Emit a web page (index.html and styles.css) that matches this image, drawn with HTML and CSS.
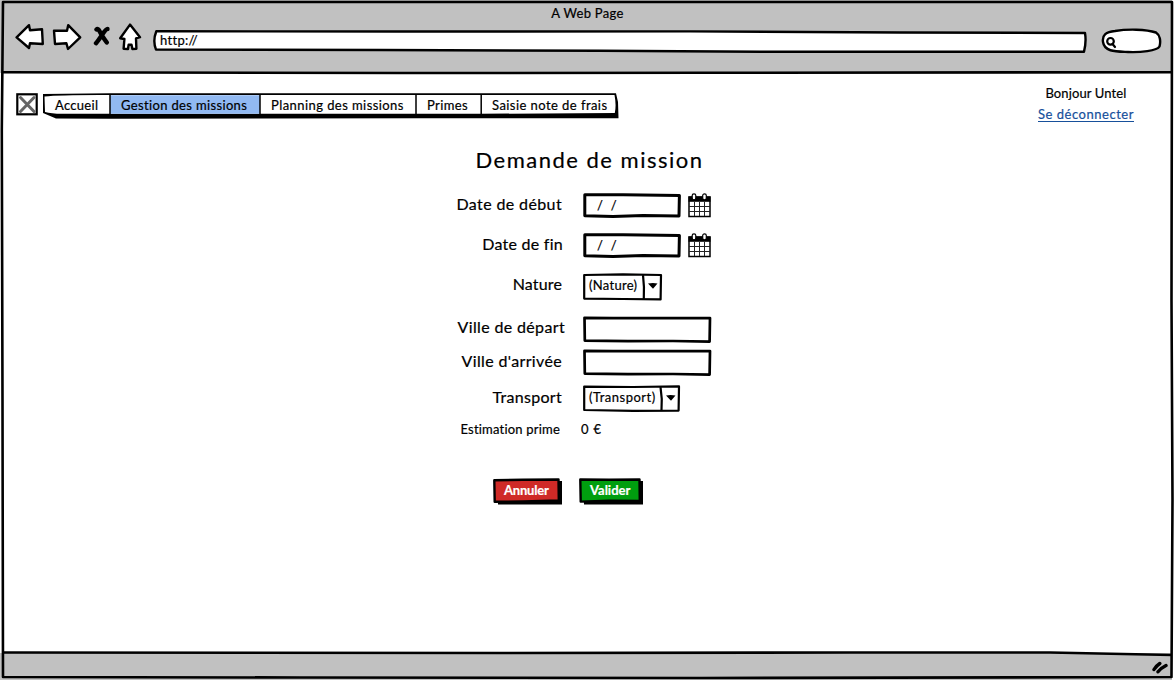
FILE: index.html
```html
<!DOCTYPE html>
<html lang="fr">
<head>
<meta charset="utf-8">
<title>Demande de mission</title>
<link rel="stylesheet" href="styles.css">
</head>
<body>
<div class="browser">
  <header class="chrome">
    <div class="title"><span class="t-title">A Web Page</span></div>
    <div class="toolbar">
      <svg class="icon" width="30" height="28" viewBox="15 23 30 28"><path class="ink-shape" d="M16.600 37.400 29 25.200 30 30.200 42 29.200 42.800 44 30 43.200 29 48z"/></svg>
      <svg class="icon icon-forward" width="30" height="28" viewBox="52 23 30 28"><path class="ink-shape" d="M54 30.600 67 30.800 68.200 25.200 80.200 37.400 68 49 66.400 43.200 55 44z"/></svg>
      <svg class="icon icon-stop" width="18" height="28" viewBox="93 23 18 28"><path class="cross" d="M96.500 29.500Q98 28 100 32T106.800 42.500M107.500 29Q106 29 102 35T96 43.200"/></svg>
      <svg class="icon icon-home" width="24" height="28" viewBox="118 23 24 28"><path class="ink-shape" d="M130 24.600 140 37.200 136 38.400 136.400 48.800 132.400 49 131.500 44.800 128.600 44.800 128 49 123.600 48.800 124.400 39 120.200 38.200z"/></svg>
      <div class="address">
        <svg class="sketch" width="936" height="26" viewBox="152 28 936 26"><path class="ink-shape" d="M156.300 31.300 400 31.500 690 31.400 900 32.500 1085 33Q1086.500 42 1084 51.800L760 51.700 600 50.800 380 50 156 49.600Q152.500 41 156.300 31.300z"/></svg>
        <span class="t-url">http://</span>
      </div>
      <svg class="icon icon-search" width="62" height="26" viewBox="1101 28 62 26"><path class="ink-shape" d="M1103 42C1102 35 1106 31.800 1115 31 1127 29 1146 29 1156 32.500 1160 35 1161 41 1159.500 46.500 1157 51 1140 52.500 1128 52 1116 51.500 1104.500 52 1103 42z"/><circle class="lens" cx="1110.500" cy="41.300" r="3.300"/><path class="lens" d="M1112.500 44 1115 47"/></svg>
    </div>
  </header>

  <main class="page">
    <div class="topbar">
      <svg class="logo" width="23" height="23" viewBox="16 93 23 23"><rect class="logo-box" x="17.300" y="94.300" width="19.400" height="20"/><path class="logo-cross" d="M20.500 97.500 34 111.500M34 97.500 20.500 111.500"/></svg>
      <nav class="menu">
        <svg class="sketch" width="577" height="28" viewBox="42 92 577 28"><path d="M43 94 110 93.300 616 93.300 618 102 618.500 118.200 420 118.200 260 118.500 110 118.800 56 118.500 43 113z"/><path fill="#fff" d="M44.500 96.500Q60 94.800 110 95H614.500Q616.500 105 614.800 113L480 113.800H64Q52 114 45 112z"/><path fill="#91b9f2" d="M110 95.200H260V113.800H110z"/><path class="divider" d="M110 94V116M260 94V116M416 94V116M481.200 94V116"/></svg>
        <a class="tab tab-accueil">Accueil</a><a class="tab tab-gestion">Gestion des missions</a><a class="tab tab-planning">Planning des missions</a><a class="tab tab-primes">Primes</a><a class="tab tab-frais">Saisie note de frais</a>
      </nav>
      <div class="user"><span class="t-hello">Bonjour Untel</span><a class="logout">Se déconnecter</a></div>
    </div>

    <h1 class="heading">Demande de mission</h1>

    <form class="form">
      <div class="row row-date">
        <label class="label l-debut">Date de début</label>
        <div class="date"><svg class="sketch" width="98" height="25" viewBox="0 0 98 25"><path class="field-date" d="M1.800 1.800 40 1.800 96.400 2.600 96 23 60 22.600 30 23.400 1.800 22.800z"/></svg><span>/</span><span>/</span></div>
        <svg class="calendar" width="23" height="25" viewBox="0 0 23 25"><path fill="#fff" stroke="#000" stroke-width="1.500" d="M1 4H22V23.500H1z"/><path d="M.5 3.500H22.500V8.800H.5z"/><path class="grid-line" d="M1 13.500H22M1 18.500H22M6.500 9V23M11.500 9V23M16.500 9V23"/><rect class="ring" x="4.200" y=".8" width="3.600" height="6" rx="1.800"/><rect class="ring" x="14.700" y=".8" width="3.600" height="6" rx="1.800"/></svg>
      </div>
      <div class="row row-date">
        <label class="label l-fin">Date de fin</label>
        <div class="date"><svg class="sketch" width="98" height="25" viewBox="0 0 98 25"><path class="field-date" d="M1.800 1.800 40 1.800 96.400 2.600 96 23 60 22.600 30 23.400 1.800 22.800z"/></svg><span>/</span><span>/</span></div>
        <svg class="calendar" width="23" height="25" viewBox="0 0 23 25"><path fill="#fff" stroke="#000" stroke-width="1.500" d="M1 4H22V23.500H1z"/><path d="M.5 3.500H22.500V8.800H.5z"/><path class="grid-line" d="M1 13.500H22M1 18.500H22M6.500 9V23M11.500 9V23M16.500 9V23"/><rect class="ring" x="4.200" y=".8" width="3.600" height="6" rx="1.800"/><rect class="ring" x="14.700" y=".8" width="3.600" height="6" rx="1.800"/></svg>
      </div>
      <div class="row row-nature">
        <label class="label l-nature">Nature</label>
        <div class="select"><svg class="sketch" width="80" height="28" viewBox="0 0 80 28"><path class="field" d="M1.200 2 40 1.400 78 2 77.600 26.400 40 26 1.200 25.600z"/><path class="field" d="M60 2Q61.500 14 60.800 26"/><path d="M65 10.500Q70 9.500 74.500 10.500L70 15.800z"/></svg><span class="t-nature">(Nature)</span></div>
      </div>
      <div class="row row-depart">
        <label class="label l-depart">Ville de départ</label>
        <div class="input"><svg class="sketch" width="129" height="27" viewBox="0 0 129 27"><path class="field-input" d="M1.500 1.800 30 2.200 127 2 126.600 25.600 90 25 45 25.200 1.800 24.600z"/></svg></div>
      </div>
      <div class="row row-arrivee">
        <label class="label l-arrivee">Ville d'arrivée</label>
        <div class="input"><svg class="sketch" width="129" height="27" viewBox="0 0 129 27"><path class="field-input" d="M1.500 1.800 30 2.200 127 2 126.600 25.600 90 25 45 25.200 1.800 24.600z"/></svg></div>
      </div>
      <div class="row row-transport">
        <label class="label l-transport">Transport</label>
        <div class="select"><svg class="sketch" width="98" height="28" viewBox="0 0 98 28"><path class="field" d="M1.200 1.600 50 2 96 1.400 95.600 25.600 50 25.800 1.200 25z"/><path class="field" d="M77.500 2Q79.500 14 78.500 25"/><path d="M83 10.500Q87.500 9.500 92.500 10.500L88 15.800z"/></svg><span class="t-transport">(Transport)</span></div>
      </div>
      <div class="row row-prime">
        <span class="label label-small">Estimation prime</span>
        <span class="amount">0 €</span>
      </div>
      <div class="actions">
        <button type="button" class="button b-cancel"><svg class="sketch" width="70" height="27" viewBox="0 0 70 27"><path d="M4 3H69V26.500H5z"/><path class="button-face" fill="#cf2a27" d="M1.300 2.200 30 1.800 65.500 1.500 65.800 22.500 30 23.400 1.700 23.800z"/></svg><span>Annuler</span></button>
        <button type="button" class="button b-ok"><svg class="sketch" width="64" height="27" viewBox="0 0 64 27"><path d="M4 3H64V26.500H5z"/><path class="button-face" fill="#009e0f" d="M1.300 1.500 30 1.800 60.500 1.500 60.800 23 30 22.800 1.700 23.600z"/></svg><span>Valider</span></button>
      </div>
    </form>
  </main>

  <footer class="status">
    <svg width="18" height="16" viewBox="1150 659 18 16"><path class="grip" d="M1154 669.500Q1156 666 1159.800 663.500M1158 671.800Q1161 668 1166 665.500"/></svg>
  </footer>
  <svg class="frame" width="1174" height="680" viewBox="0 0 1174 680"><path class="frame-line" d="M3 2H1172L1171.500 300 1172.500 500 1171.500 677 700 678 300 677.500 3 677 2.500 400 1.800 130z"/><path class="frame-line" d="M3 72.200 400 73 700 72.800 1172 72.200M3 652.500 500 653 850 652.500 1050 652.500 1172 655"/></svg>
</div>
</body>
</html>
```
FILE: styles.css
```css
* { box-sizing: border-box; }
body {
  margin: 0;
  background: #fff;
  color: #000;
  font: 13px/20px Lato, "Open Sans", sans-serif;
  letter-spacing: 0.3px;
  font-variant-ligatures: none;
  -webkit-text-stroke: 0.2px;
}
svg { display: block; flex: none; }
.browser { position: relative; width: 1174px; height: 680px; display: flex; flex-direction: column; overflow: hidden; }
.frame { position: absolute; inset: 0; pointer-events: none; }
.frame-line { fill: none; stroke: #000; stroke-width: 2.6; stroke-linejoin: round; }
.sketch { position: absolute; left: 0; top: 0; z-index: -1; }
.ink-shape { fill: #fff; stroke: #000; stroke-width: 2.4; stroke-linejoin: round; }

/* Browser chrome */
.chrome { height: 73px; background: #c1c1c1; padding: 3px 0 0 15px; margin-right: 2px; }
.title { height: 20px; text-align: center; padding-right: 12px; }
.toolbar { display: flex; align-items: flex-start; }
.icon-forward { margin-left: 7px; }
.icon-stop { margin-left: 11px; }
.icon-home { margin-left: 7px; }
.cross { fill: none; stroke: #000; stroke-width: 4.4; stroke-linecap: round; }
.address { position: relative; z-index: 0; flex: none; width: 936px; height: 26px; margin: 5px 0 0 10px; padding: 2px 0 0 8px; }
.icon-search { margin: 5px 0 0 13px; }
.lens { fill: none; stroke: #000; stroke-width: 2.2; stroke-linecap: round; }

/* Navigation */
.page { flex: 1; padding: 10px 16px 0; }
.topbar { display: flex; align-items: flex-start; height: 62px; }
.logo { margin-top: 10px; }
.logo-box { fill: #fff; stroke: #000; stroke-width: 2.2; }
.logo-cross { fill: none; stroke: #666; stroke-width: 3; stroke-linecap: round; }
.menu { position: relative; z-index: 0; display: flex; width: 577px; height: 28px; margin: 9px 0 0 3px; padding-top: 3px; }
.divider { fill: none; stroke: #000; stroke-width: 1.5; }
.tab { flex: none; white-space: nowrap; padding-left: 11px; }
.tab-accueil { width: 68px; padding-left: 13px; }
.tab-gestion { width: 150px; letter-spacing: 0.35px; }
.tab-planning { width: 156px; letter-spacing: 0.43px; }
.tab-primes { width: 65px; letter-spacing: 0.4px; }
.tab-frais { letter-spacing: 0.44px; }
.user { margin-left: auto; width: 144px; display: flex; flex-direction: column; align-items: center; }
.t-hello { line-height: 21px; letter-spacing: 0.12px; }
.logout { margin-top: 3px; color: #17509b; line-height: 14px; letter-spacing: 0.53px; border-bottom: 1px solid #17509b; }

/* Mission form */
.heading { margin: 0; height: 48px; padding-left: 5px; text-align: center; font-size: 22px; line-height: 30px; font-weight: 400; letter-spacing: 1.5px; }
.form { width: 300px; margin-left: 425px; }
.row { display: flex; align-items: flex-start; }
.row-date { height: 40px; }
.row-nature { height: 43px; }
.row-depart { height: 33px; }
.row-arrivee { height: 36px; }
.row-transport { height: 34px; }
.row-prime { height: 59px; }
.label { flex: none; width: 142px; padding-right: 21px; font-size: 16px; line-height: 22px; text-align: right; white-space: nowrap; }
.l-debut { letter-spacing: 0.38px; }
.l-fin { padding-right: 20px; letter-spacing: 0.26px; }
.l-nature { letter-spacing: 0.15px; }
.l-depart { padding-right: 18px; letter-spacing: 0.35px; }
.l-arrivee { padding-top: 1px; letter-spacing: 0.35px; }
.l-transport { padding-top: 1px; }
.label-small { width: 140px; font-size: 13px; line-height: 20px; letter-spacing: 0.2px; }
.amount { letter-spacing: 0.8px; }
.date, .select, .input { position: relative; z-index: 0; }
.date { width: 98px; height: 25px; padding: 2px 0 0 14px; display: flex; gap: 7.5px; }
.calendar { margin-left: 7px; }
.grid-line { fill: none; stroke: #222; stroke-width: 1; }
.ring { fill: #fff; stroke: #000; stroke-width: 1.2; }
.select { width: 98px; height: 28px; padding: 2px 0 0 6px; }
.t-transport { letter-spacing: 0.5px; }
.input { width: 129px; height: 27px; }
.field-date { fill: #fff; stroke: #000; stroke-width: 3; stroke-linejoin: round; }
.field { fill: none; stroke: #000; stroke-width: 2.2; stroke-linejoin: round; }
.field-input { fill: #fff; stroke: #000; stroke-width: 2.7; stroke-linejoin: round; }
.actions { display: flex; gap: 16px; padding-left: 52px; }
.button { position: relative; z-index: 0; height: 27px; border: 0; background: none; color: #fff; font: 700 13px/20px Lato, sans-serif; padding: 0 0 3px 11px; text-align: left; letter-spacing: 0; }
.b-cancel { width: 70px; letter-spacing: -0.2px; }
.b-ok { width: 64px; }
.button-face { stroke: #000; stroke-width: 2.4; stroke-linejoin: round; }

/* Status bar */
.status { height: 27px; background: #c1c1c1; margin-right: 2px; padding: 6px 4px 0 0; display: flex; justify-content: flex-end; }
.grip { fill: none; stroke: #000; stroke-width: 3.4; stroke-linecap: round; }
```
